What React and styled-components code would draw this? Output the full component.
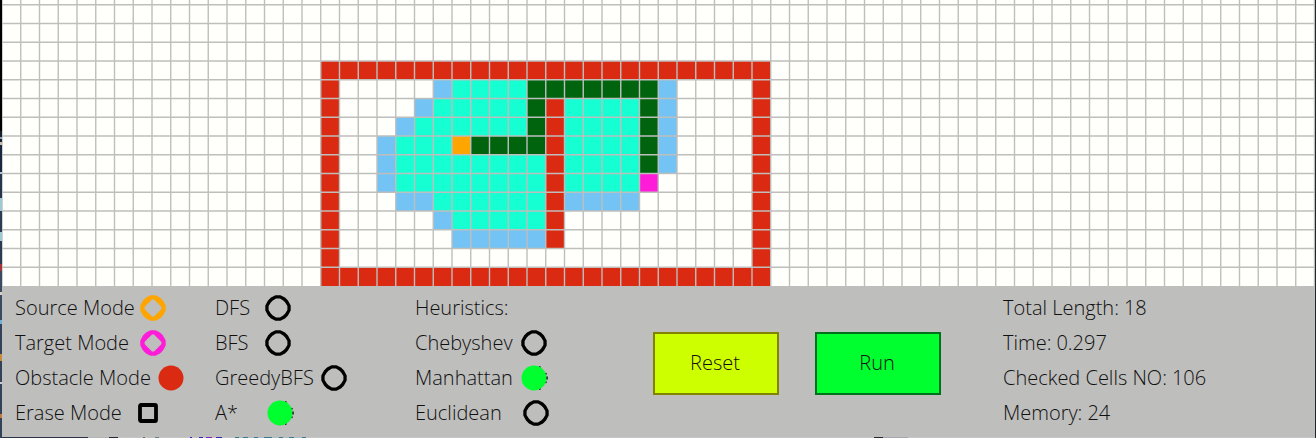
import React, { useState } from "react";
import styled, { createGlobalStyle } from "styled-components";

const GlobalStyle = createGlobalStyle`
  *, *::before, *::after { box-sizing: border-box; }
  body { margin: 0; background: #2b3a52; }
`;

const ink = "#101010";

const Window = styled.main`
  display: flex;
  flex-direction: column;
  padding-left: 2px;
  border-right: 1px solid #20262c;
  background: linear-gradient(
    #000 0 131px, #16202f 131px 137px, #8aa0b4 137px 139px, #16202f 139px 142px,
    #c9b9a8 142px 145px, #1b2740 145px 172px, #a9c4d8 172px 174px, #26344c 174px 198px,
    #9cc9d4 198px 211px, #2c3a54 211px 232px, #9cc9d4 232px 241px, #2c3a54 241px 264px,
    #a8323a 264px 271px, #3a4a60 271px 292px, #d8d0c0 292px 295px, #3a4a60 295px 320px,
    #6fb0d8 320px 324px, #33415a 324px 354px, #c98a3c 354px 361px, #33415a 361px 382px,
    #c8ccd0 382px 384px, #33415a 384px 414px, #c07a3c 414px 418px, #33415a 418px
  );
  color: ${ink};
  font: 300 20px/35px "Open Sans", "Noto Sans", sans-serif;
`;

const Board = styled.svg`
  display: block;
  width: 100%;
  height: auto;
  background: #fffffb;
`;

const Panel = styled.section`
  display: grid;
  grid-template-columns: 200fr 200fr 238fr 350fr 312fr;
  align-items: center;
  padding: 4px 0 7px 13px;
  background: #bebebd;
`;

const Sliver = styled.div`
  height: 1px;
  background: linear-gradient(
    90deg,
    #2c3348 0 86px, #b4b4b4 86px 107px, #22283c 107px 116px, #c6c6c6 116px 141px,
    #7a6a60 141px 143px, #c6c6c6 143px 153px, #66808a 153px 157px, #c6c6c6 157px 188px,
    #3a22b8 188px 190px, #c6c6c6 190px 197px, #3a22b8 197px 201px, #c6c6c6 201px 204px,
    #8a22b8 204px 210px, #c6c6c6 210px 214px, #3a22b8 214px 220px, #c6c6c6 220px 233px,
    #3c7890 233px 237px, #b0bcc0 237px 241px, #3c7890 241px 246px, #b0bcc0 246px 252px,
    #3c7890 252px 256px, #b0bcc0 256px 262px, #3c7890 262px 270px, #b0bcc0 270px 277px,
    #3c7890 277px 281px, #b0bcc0 281px 287px, #3c7890 287px 292px, #b0bcc0 292px 300px,
    #3c7890 300px 304px, #c6c6c6 304px 872px, #22262e 872px 881px, #a6a6b0 881px 906px,
    #c6c6c6 906px
  );
`;

const Group = styled.fieldset`
  display: flex;
  flex-direction: column;
  min-width: 0;
  margin: 0;
  padding: 0;
  border: 0;
`;

const Legend = styled.legend`
  padding: 0;
`;

const Option = styled.label`
  display: flex;
  align-items: center;
  height: 35px;
  white-space: nowrap;
`;

const OptionText = styled.span`
  flex: 0 0 ${(p) => p.$width}px;
`;

const Mark = styled.span`
  position: relative;
  display: flex;
  flex: none;
`;

const Radio = styled.input`
  position: absolute;
  inset: 0;
  width: 100%;
  height: 100%;
  margin: 0;
  appearance: none;
  cursor: pointer;
`;

const Actions = styled.div`
  display: flex;
  gap: 36px;
  padding-top: 6px;
`;

const Action = styled.button`
  width: 126px;
  height: 63px;
  padding: 0 2px 2px 0;
  border: 2px solid ${(p) => p.$edge};
  background: ${(p) => p.$fill};
  color: ${ink};
  font: inherit;
  cursor: pointer;
`;

const Stats = styled.dl`
  margin: 0;
`;

const Stat = styled.div`
  display: flex;
  gap: 5px;
  white-space: nowrap;
`;

const Value = styled.dd`
  margin: 0;
`;

const CELL = 75 / 4;
const COLUMNS = 70;
const FIRST_ROW = 3;
const HEIGHT = 286;
const TOP = 61 - FIRST_ROW * CELL;

const colors = {
  W: "#db2a12",
  o: "#73c3f4",
  v: "#16ffd2",
  p: "#00640f",
  S: "#ffa500",
  T: "#ff1cd8",
};

// Each row starts at the left wall of the maze.
const WALL_COLUMN = 17;
const maze = [
  "WWWWWWWWWWWWWWWWWWWWWWWW",
  "W.....ovvvvpppppppo....W",
  "W....ovvvvvpWvvvvpo....W",
  "W...ovvvvvvpWvvvvpo....W",
  "W..ovvvSppppWvvvvpo....W",
  "W..ovvvvvvvvWvvvvpo....W",
  "W..ovvvvvvvvWvvvvT.....W",
  "W...oovvvvvvWoooo......W",
  "W.....ovvvvvW..........W",
  "W......oooooW..........W",
  "W......................W",
  "WWWWWWWWWWWWWWWWWWWWWWWW",
];

function Grid() {
  const columns = Array.from({ length: COLUMNS + 1 }, (_, i) => i * CELL);
  const rows = Array.from({ length: 15 }, (_, i) => TOP + i * CELL);
  return (
    <Board viewBox={`0 0 1313 ${HEIGHT}`} role="img" aria-label="Path grid">
      {maze.flatMap((line, r) =>
        [...line].map((key, c) =>
          colors[key] ? (
            <rect
              key={`${r}-${c}`}
              x={(WALL_COLUMN + c) * CELL}
              y={61 + r * CELL}
              width={CELL}
              height={CELL}
              fill={colors[key]}
            />
          ) : null
        )
      )}
      <g stroke="#bebebd" strokeWidth="1.4">
        {columns.map((x) => (
          <line key={x} x1={x} x2={x} y1="0" y2={HEIGHT} />
        ))}
        {rows.map((y) => (
          <line key={y} x1="0" x2="1313" y1={y} y2={y} />
        ))}
      </g>
    </Board>
  );
}

const outer =
  "M10.5 .3H15.5L20 2.6L23 5.6L25.7 10.5V15.5L23 20.4L20 23.4L15.5 25.7H10.5L6 23.4L3 20.4L.3 15.5V10.5L3 5.6L6 2.6Z";
const thinHole =
  "M11 3.6H15L18.5 5.8L20.2 7.5L22.4 11V15L20.2 18.5L18.5 20.2L15 22.4H11L7.5 20.2L5.8 18.5L3.6 15V11L5.8 7.5L7.5 5.8Z";
const thickHole = "M12 4.6H14L17 7.4L18.6 9L21.4 12V14L18.6 17L17 18.6L14 21.4H12L9 18.6L7.4 17L4.6 14V12L7.4 9L9 7.4Z";

function Glyph({ square, checked, color, fill, thick }) {
  if (square)
    return (
      <svg width="20" height="20" aria-hidden="true">
        <rect x="2" y="2" width="16" height="16" rx="1" fill={checked ? color : "none"} stroke={color} strokeWidth="3.8" />
      </svg>
    );
  if (checked)
    return (
      <svg width="27" height="26" aria-hidden="true">
        {color === "#000" && (
          <path
            d="M18 1.8L19.5 2.5M24.5 8L25.2 9.5M25.9 11.5V14.5M25.2 16.5L24.5 18M19.5 23.5L18 24.2"
            fill="none"
            stroke="#000"
            strokeWidth="1.6"
          />
        )}
        <circle cx="13" cy="13" r="12.5" fill={fill} />
      </svg>
    );
  return (
    <svg width="26" height="26" aria-hidden="true">
      <path d={outer + (thick ? thickHole : thinHole)} fill={color} fillRule="evenodd" />
    </svg>
  );
}

function Choices({ name, label, legend, options, initial }) {
  const [value, setValue] = useState(initial);
  return (
    <Group aria-label={label}>
      {legend && <Legend>{legend}</Legend>}
      {options.map(({ text, width, color = "#000", fill = "#00ff2f", thick, square }) => (
        <Option key={text}>
          <OptionText $width={width}>{text}</OptionText>
          <Mark>
            <Radio type="radio" name={name} checked={value === text} onChange={() => setValue(text)} />
            <Glyph square={square} checked={value === text} color={color} fill={fill} thick={thick} />
          </Mark>
        </Option>
      ))}
    </Group>
  );
}

const modes = [
  { text: "Source Mode", width: 125, color: "#ffa500", thick: true },
  { text: "Target Mode", width: 125, color: "#ff1cd8", thick: true },
  { text: "Obstacle Mode", width: 143, color: "#db2a12", fill: "#db2a12", thick: true },
  { text: "Erase Mode", width: 123, square: true },
];

const algorithms = [
  { text: "DFS", width: 50 },
  { text: "BFS", width: 50 },
  { text: "GreedyBFS", width: 106 },
  { text: "A*", width: 52 },
];

const heuristics = [
  { text: "Chebyshev", width: 106 },
  { text: "Manhattan", width: 106 },
  { text: "Euclidean", width: 108 },
];

const stats = [
  ["Total Length:", "18"],
  ["Time:", "0.297"],
  ["Checked Cells NO:", "106"],
  ["Memory:", "24"],
];

export default function App() {
  return (
    <>
      <GlobalStyle />
      <Window>
        <Grid />
        <Panel>
          <Choices name="mode" label="Mode" options={modes} initial="Obstacle Mode" />
          <Choices name="algorithm" label="Algorithm" options={algorithms} initial="A*" />
          <Choices name="heuristic" legend="Heuristics:" options={heuristics} initial="Manhattan" />
          <Actions>
            <Action type="button" $fill="#ceff00" $edge="#808400">Reset</Action>
            <Action type="button" $fill="#00ff2f" $edge="#00701c">Run</Action>
          </Actions>
          <Stats>
            {stats.map(([term, value]) => (
              <Stat key={term}>
                <dt>{term}</dt>
                <Value>{value}</Value>
              </Stat>
            ))}
          </Stats>
        </Panel>
        <Sliver />
      </Window>
    </>
  );
}
